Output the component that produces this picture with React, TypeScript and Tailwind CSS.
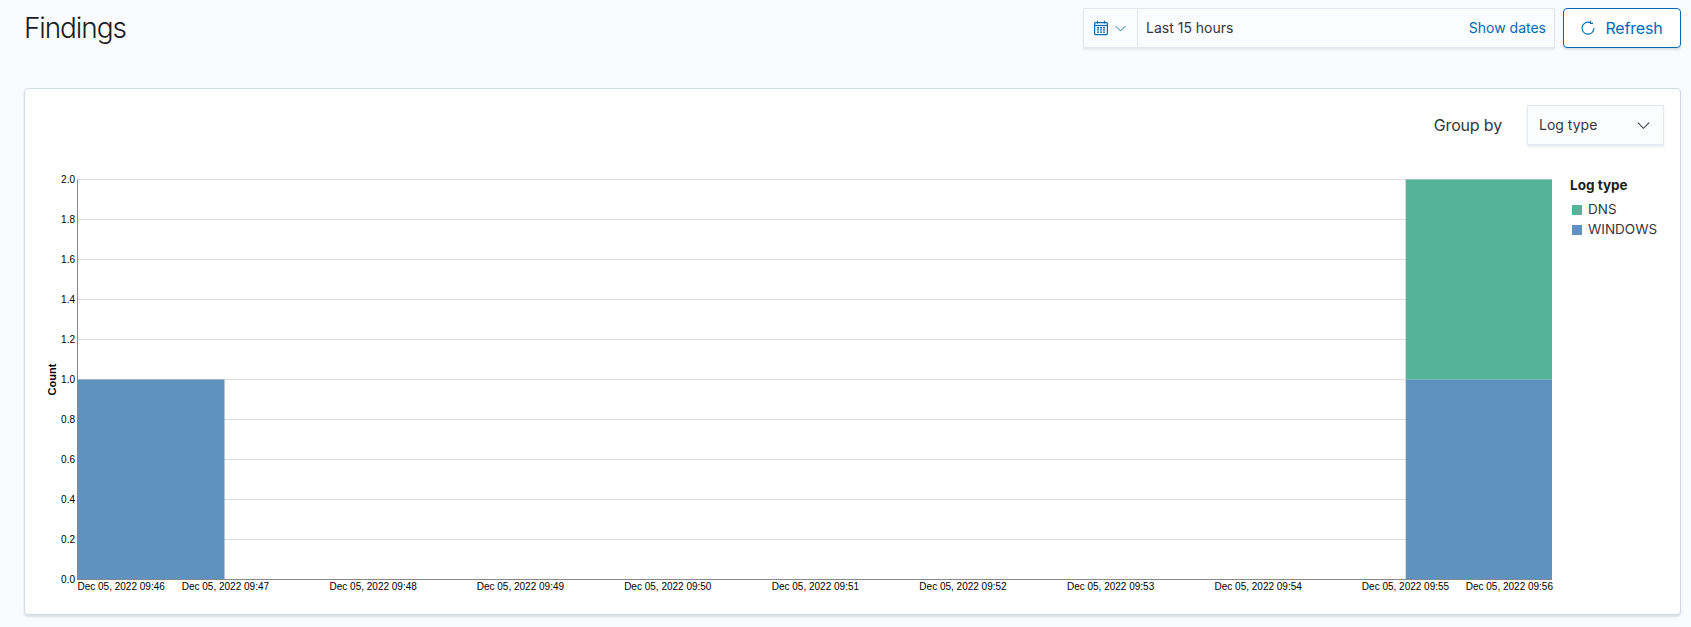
import React from "react";

const yTicks = ["2.0", "1.8", "1.6", "1.4", "1.2", "1.0", "0.8", "0.6", "0.4", "0.2", "0.0"];
const xTicks: [string, number, "start" | "middle" | "end"][] = [
  ["Dec 05, 2022 09:46", 77.5, "start"],
  ["Dec 05, 2022 09:47", 225.4, "middle"],
  ["Dec 05, 2022 09:48", 373.2, "middle"],
  ["Dec 05, 2022 09:49", 520.4, "middle"],
  ["Dec 05, 2022 09:50", 667.8, "middle"],
  ["Dec 05, 2022 09:51", 815.4, "middle"],
  ["Dec 05, 2022 09:52", 963, "middle"],
  ["Dec 05, 2022 09:53", 1110.6, "middle"],
  ["Dec 05, 2022 09:54", 1258.2, "middle"],
  ["Dec 05, 2022 09:55", 1405.5, "middle"],
  ["Dec 05, 2022 09:56", 1553, "end"],
];

function CalendarIcon() {
  return (
    <svg width="16" height="16" viewBox="0 0 16 16" fill="none" stroke="#006bb4" strokeWidth="1.2">
      <rect x="1.6" y="2.6" width="12.8" height="12" rx="1" />
      <path d="M1.5 5.5h13" />
      <path d="M4.5 .8v2.6M11.5 .8v2.6" />
      <path d="M4 7.7h2M7 7.7h2M10 7.7h2M4 9.9h2M7 9.9h2M10 9.9h2M4 12.1h2M7 12.1h2M10 12.1h2" strokeWidth="1.4" />
    </svg>
  );
}

function Chevron({ size, color }: { size: number; color: string }) {
  return (
    <svg width={size} height={size} viewBox="0 0 16 16" fill="none" stroke={color} strokeWidth="1.1">
      <path d="M2 5l6 6 6-6" />
    </svg>
  );
}

function RefreshIcon() {
  return (
    <svg width="16" height="16" viewBox="0 0 16 16" fill="none" stroke="#006bb4" strokeWidth="1.1">
      <path d="M10.5 2.7A6 6 0 1 0 14 8" />
      <path d="M10.5 .8v2.6H13" />
    </svg>
  );
}

function Chart() {
  return (
    <svg className="block w-[1655px] h-[469px]" viewBox="25 145 1655 469">
      {yTicks.map((t, i) => (
        <line key={t} x1={77} x2={1552} y1={179.5 + i * 40} y2={179.5 + i * 40} stroke="#dddddd" />
      ))}
      <rect x={77.5} y={379.5} width={147} height={200} fill="#6092c0" />
      <rect x={1405.7} y={379.5} width={146.3} height={200} fill="#6092c0" />
      <rect x={1405.7} y={179.5} width={146.3} height={200} fill="#54b399" />
      <line x1={77.5} x2={77.5} y1={179.5} y2={580} stroke="#888888" />
      <line x1={77} x2={1552} y1={579.5} y2={579.5} stroke="#888888" />
      <g fontFamily="'Liberation Sans', Arial, sans-serif" fontSize="10" fill="#000000">
        {yTicks.map((t, i) => (
          <text key={t} x={75} y={183 + i * 40} textAnchor="end">{t}</text>
        ))}
        {xTicks.map(([t, x, a]) => (
          <text key={t} x={x} y={590} textAnchor={a}>{t}</text>
        ))}
        <text transform="translate(55.5 379.5) rotate(-90)" textAnchor="middle" fontWeight="700" fontSize="11">Count</text>
      </g>
      <g fontFamily="Inter, sans-serif">
        <text x={1570} y={189.5} fontSize="13.5" fontWeight="700" fill="#1a1c21">Log type</text>
        <rect x={1572} y={205} width={10} height={10} fill="#54b399" />
        <rect x={1572} y={225} width={10} height={10} fill="#6092c0" />
        <text x={1588} y={214} fontSize="13.5" fill="#343741">DNS</text>
        <text x={1588} y={234} fontSize="13.5" fill="#343741">WINDOWS</text>
      </g>
    </svg>
  );
}

export default function App() {
  return (
    <div className="min-h-[627px] bg-[#fafbfd] pl-6 pr-[10px] pt-2 font-['Inter',sans-serif] text-[#343741]">
      <div className="flex items-start justify-between">
        <h1 className="text-[28px] leading-[40px] font-light tracking-[-0.04em] text-[#1a1c21]">Findings</h1>
        <div className="flex gap-2">
          <div className="flex h-10 w-[472px] items-center border border-[#e4e8f0] bg-[#fbfcfd] shadow-[0_2px_2px_rgba(152,162,179,0.2)]">
            <div className="flex h-full w-[54px] shrink-0 items-center gap-[5px] border-r border-[#e4e8f0] pl-[9px]">
              <CalendarIcon />
              <Chevron size={13} color="#006bb4" />
            </div>
            <span className="pl-2 text-sm">Last 15 hours</span>
            <span className="ml-auto pr-2 text-sm text-[#006bb4]">Show dates</span>
          </div>
          <button className="flex h-10 w-[118px] items-center justify-center gap-[9px] rounded-[4px] border border-[#006bb4] bg-white pr-px text-base tracking-[-0.01em] text-[#006bb4] shadow-[0_2px_2px_rgba(152,162,179,0.3)]">
            <RefreshIcon />
            Refresh
          </button>
        </div>
      </div>
      <div className="mt-10 rounded-[4px] border border-[#d3dae6] bg-white shadow-[0_2px_2px_rgba(152,162,179,0.3)]">
        <div className="flex items-center justify-end gap-[25px] pr-4 pt-4">
          <span className="text-base tracking-[-0.01em]">Group by</span>
          <div className="flex h-10 w-[137px] items-center justify-between border border-[#e4e8f0] bg-[#fbfcfd] pl-[11px] pr-3 text-sm shadow-[0_2px_2px_rgba(152,162,179,0.2)]">
            Log type
            <Chevron size={15} color="#343741" />
          </div>
        </div>
        <Chart />
      </div>
    </div>
  );
}
